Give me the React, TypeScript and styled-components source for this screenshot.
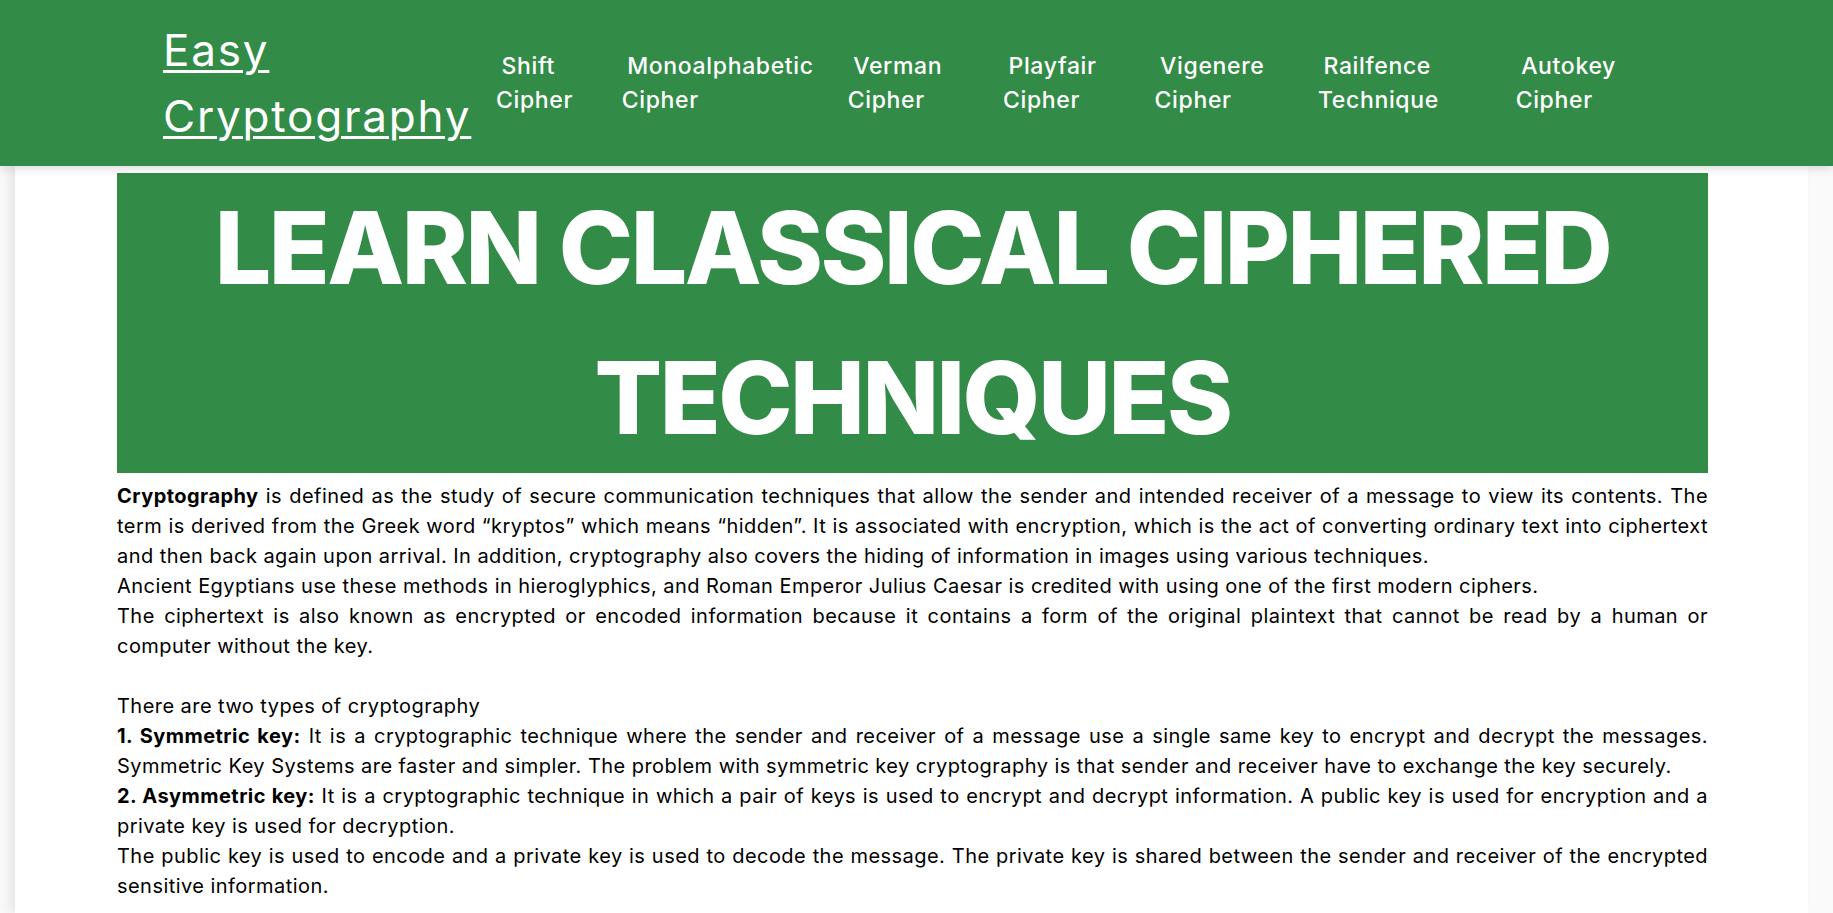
import React from "react";
import styled, { createGlobalStyle } from "styled-components";

const GREEN = "#328c48";

const GlobalStyle = createGlobalStyle`
  html, body {
    margin: 0;
    padding: 0;
    background: #fafafa;
  }
  body {
    font-family: Inter, "Open Sans", sans-serif;
    color: #000;
    overflow: hidden;
  }
  * { box-sizing: border-box; }
`;

const Header = styled.header`
  position: relative;
  z-index: 2;
  height: 166px;
  background: ${GREEN};
  box-shadow: 0 3px 9px rgba(0, 0, 0, 0.13);
  display: flex;
  align-items: center;
  padding-left: 163px;
`;

const Brand = styled.div`
  flex: 0 0 333px;
`;

const BrandLink = styled.a`
  display: inline-block;
  width: min-content;
  font-size: 44px;
  line-height: 66px;
  font-weight: 400;
  letter-spacing: 1.8px;
  color: #fff;
  text-decoration: underline;
  text-decoration-thickness: 3px;
  text-underline-offset: 4px;
`;

const NavList = styled.ul`
  list-style: none;
  margin: 0;
  padding: 0;
  display: grid;
  grid-template-columns: 125.7px 226px 155.3px 151.6px 163.4px 197.7px auto;
`;

const NavItem = styled.li`
  display: block;
`;

const NavLink = styled.a`
  display: block;
  width: min-content;
  text-indent: 5.5px;
  font-size: 23px;
  line-height: 34px;
  font-weight: 500;
  letter-spacing: 0.65px;
  color: #fff;
  text-decoration: none;
`;

const Card = styled.main`
  margin-left: 15px;
  width: 1793px;
  min-height: 747px;
  background: #fff;
  box-shadow: -6px 0 10px rgba(0, 0, 0, 0.08);
  padding: 7px 100px 0 102px;
`;

const Banner = styled.section`
  background: ${GREEN};
`;

const Title = styled.h1`
  margin: 0;
  text-align: center;
  color: #fff;
  font-weight: 800;
  font-size: 100px;
  line-height: 150px;
  letter-spacing: -2.5px;
`;

const Body = styled.p`
  margin: 8px 0 0;
  font-size: 20px;
  line-height: 30px;
  letter-spacing: 0.45px;
  text-align: justify;
`;

const Strong = styled.b`
  font-weight: 700;
`;

const navItems = [
  "Shift Cipher",
  "Monoalphabetic Cipher",
  "Verman Cipher",
  "Playfair Cipher",
  "Vigenere Cipher",
  "Railfence Technique",
  "Autokey Cipher",
];

export default function App() {
  return (
    <>
      <GlobalStyle />
      <Header>
        <Brand>
          <BrandLink href="#">Easy Cryptography</BrandLink>
        </Brand>
        <nav>
          <NavList>
            {navItems.map((t) => (
              <NavItem key={t}>
                <NavLink href="#">{t}</NavLink>
              </NavItem>
            ))}
          </NavList>
        </nav>
      </Header>
      <Card>
        <Banner>
          <Title>LEARN CLASSICAL CIPHERED TECHNIQUES</Title>
        </Banner>
        <Body>
          <Strong>Cryptography</Strong> is defined as the study of secure communication
          techniques that allow the sender and intended receiver of a message to view its
          contents. The term is derived from the Greek word “kryptos” which means “hidden”.
          It is associated with encryption, which is the act of converting ordinary text into
          ciphertext and then back again upon arrival. In addition, cryptography also covers
          the hiding of information in images using various techniques.
          <br />
          Ancient Egyptians use these methods in hieroglyphics, and Roman Emperor Julius Caesar
          is credited with using one of the first modern ciphers.
          <br />
          The ciphertext is also known as encrypted or encoded information because it contains
          a form of the original plaintext that cannot be read by a human or computer without
          the key.
          <br />
          <br />
          There are two types of cryptography
          <br />
          <Strong>1. Symmetric key:</Strong> It is a cryptographic technique where the sender
          and receiver of a message use a single same key to encrypt and decrypt the messages.
          Symmetric Key Systems are faster and simpler. The problem with symmetric key
          cryptography is that sender and receiver have to exchange the key securely.
          <br />
          <Strong>2. Asymmetric key:</Strong> It is a cryptographic technique in which a pair of
          keys is used to encrypt and decrypt information. A public key is used for encryption
          and a private key is used for decryption.
          <br />
          The public key is used to encode and a private key is used to decode the message. The
          private key is shared between the sender and receiver of the encrypted sensitive
          information.
        </Body>
      </Card>
    </>
  );
}
